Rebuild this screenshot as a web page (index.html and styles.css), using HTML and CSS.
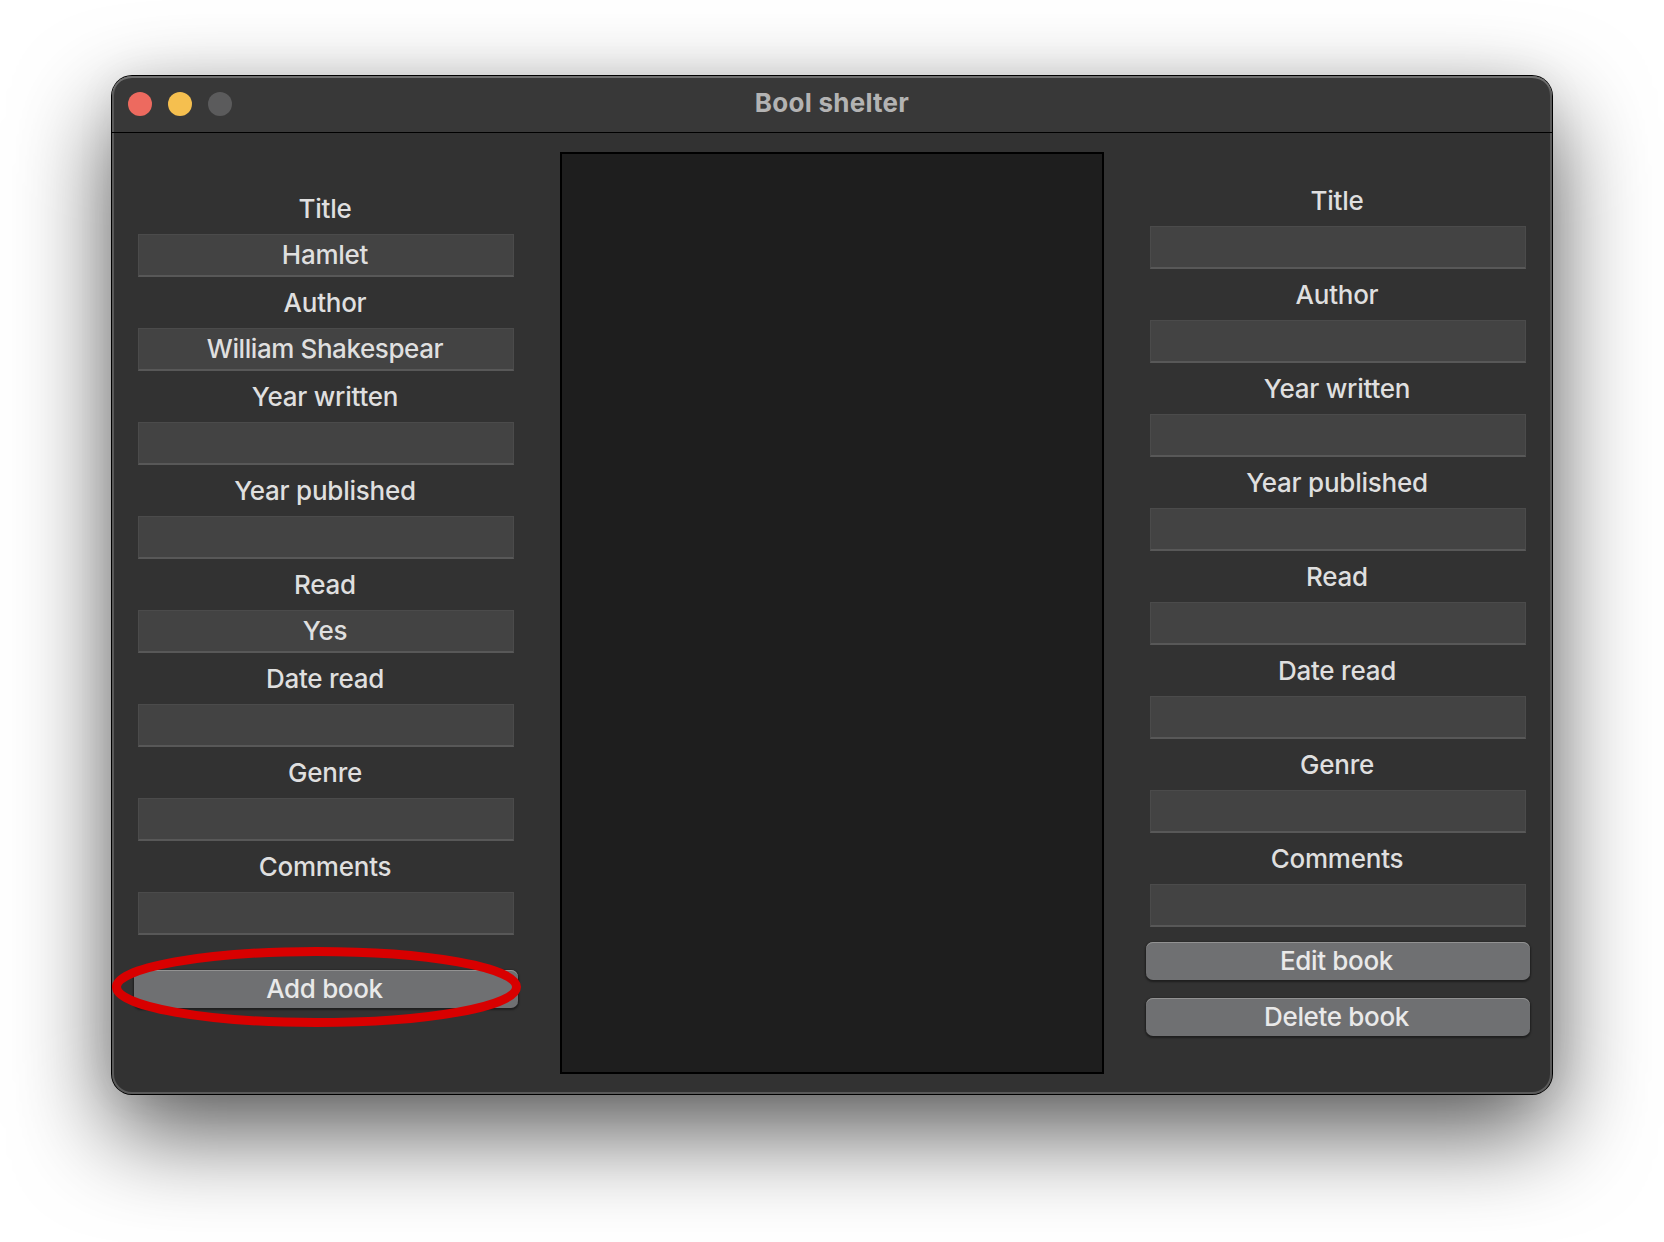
FILE: index.html
```html
<!DOCTYPE html>
<html lang="en">
<head>
<meta charset="utf-8">
<title>Bool shelter</title>
<link rel="stylesheet" href="styles.css">
</head>
<body>
<main class="window">
  <header class="titlebar">
    <div class="lights"><span class="light close"></span><span class="light minimize"></span><span class="light zoom"></span></div>
    <h1 class="title">Bool shelter</h1>
  </header>
  <div class="content">
    <form class="panel add">
      <label class="label">Title</label><div class="field">Hamlet</div>
      <label class="label">Author</label><div class="field"><span class="name">William Shakespear</span></div>
      <label class="label">Year written</label><div class="field"></div>
      <label class="label">Year published</label><div class="field"></div>
      <label class="label">Read</label><div class="field">Yes</div>
      <label class="label">Date read</label><div class="field"></div>
      <label class="label">Genre</label><div class="field"></div>
      <label class="label">Comments</label><div class="field"></div>
      <div class="actions"><button type="button" class="button">Add book</button>
        <svg class="highlight" width="412" height="82" viewBox="0 0 412 82"><ellipse cx="205.5" cy="41" rx="200" ry="35.5" fill="none" stroke="#d80000" stroke-width="9"/></svg>
      </div>
    </form>
    <section class="list"></section>
    <form class="panel edit">
      <label class="label">Title</label><div class="field"></div>
      <label class="label">Author</label><div class="field"></div>
      <label class="label">Year written</label><div class="field"></div>
      <label class="label">Year published</label><div class="field"></div>
      <label class="label">Read</label><div class="field"></div>
      <label class="label">Date read</label><div class="field"></div>
      <label class="label">Genre</label><div class="field"></div>
      <label class="label">Comments</label><div class="field"></div>
      <div class="actions"><button type="button" class="button">Edit book</button><button type="button" class="button">Delete book</button></div>
    </form>
  </div>
</main>
</body>
</html>
```
FILE: styles.css
```css
* { box-sizing: border-box; }
body {
  margin: 0;
  height: 1242px;
  padding: 76px 112px 0;
  overflow: hidden;
  background: #fff;
  font: 450 26px/32px Inter, "Liberation Sans", sans-serif;
  letter-spacing: -.24px;
  color: #dfdfdf;
}
.window {
  width: 1440px;
  height: 1018px;
  border-radius: 20px;
  background: #323232;
  box-shadow: inset 0 0 0 2px #5a5a5a, 0 0 0 1px #000, 0 38px 96px rgba(0, 0, 0, .66), 0 0 40px rgba(0, 0, 0, .06);
}
.titlebar {
  display: grid;
  grid-template-columns: 1fr auto 1fr;
  align-items: center;
  height: 57px;
  padding: 0 16px;
  border-bottom: 1px solid #000;
  border-radius: 20px 20px 0 0;
  background: #383838;
  box-shadow: inset 0 2px 0 #707070, inset 2px 0 0 #5a5a5a, inset -2px 0 0 #5a5a5a;
}
.lights { display: flex; gap: 16px; }
.light { width: 24px; height: 24px; border-radius: 50%; }
.close { background: #ed6a5f; }
.minimize { background: #f5bf4f; }
.zoom { background: #5b5b5c; }
.title {
  margin: 0;
  padding-bottom: 2px;
  font-size: 26px;
  font-weight: 700;
  letter-spacing: .25px;
  color: #b3b3b3;
}
.content {
  display: grid;
  grid-template-columns: 376px 544px 376px;
  justify-content: space-between;
  padding: 19px 26px 0;
}
.panel { display: flex; flex-direction: column; text-align: center; }
.add { padding-top: 31px; }
.edit { padding-top: 23px; }
.label { height: 51px; padding-top: 10px; padding-right: 2px; }
.field {
  height: 43px;
  padding: 4px 2px 0 0;
  background: #434343;
  border: 1px solid #4b4b4b;
  border-bottom: 2px solid #585858;
}
.name { letter-spacing: -.42px; }
.actions { position: relative; display: flex; flex-direction: column; gap: 18px; margin: 35px -4px 0; }
.edit .actions { margin-top: 15px; }
.button {
  height: 38px;
  padding: 0 3px 0 0;
  border: 0;
  border-radius: 7px;
  background: #6f7072;
  box-shadow: inset 0 1px 0 #929292, 0 1px 2px 1px rgba(0, 0, 0, .4);
  font: inherit;
  letter-spacing: -.34px;
  color: #e9e9e9;
}
.highlight { position: absolute; left: -23px; top: -24px; }
.list { height: 922px; border: 2px solid #000; background: #1e1e1e; }
```
